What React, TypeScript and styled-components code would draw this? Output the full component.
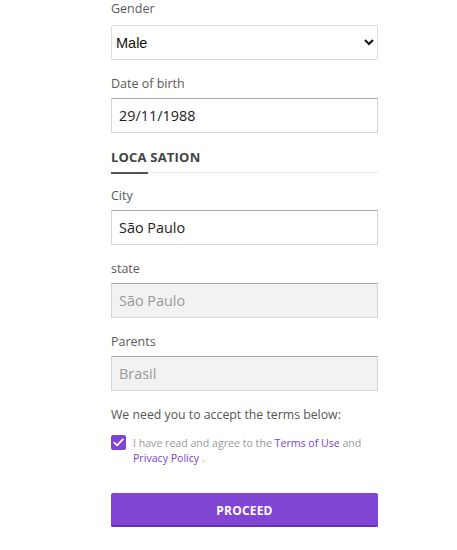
import styled, { createGlobalStyle } from "styled-components";
import { useState } from "react";

const GlobalStyle = createGlobalStyle`
  html, body {
    margin: 0;
    padding: 0;
    background: #fff;
  }
  body {
    font-family: "Open Sans", "Liberation Sans", Arial, sans-serif;
  }
`;

const Page = styled.div`
  width: 457px;
  height: 550px;
  overflow: hidden;
  padding-left: 111px;
  box-sizing: border-box;
`;

const Form = styled.form`
  width: 267px;
  display: flex;
  flex-direction: column;
  margin: 0;
`;

const Field = styled.div`
  display: flex;
  flex-direction: column;
  margin-bottom: 15px;
`;

const Label = styled.label`
  font-size: 12.5px;
  line-height: 18px;
  color: #5a5a5a;
  margin-bottom: 5px;
`;

const Select = styled.select`
  height: 35px;
  width: 100%;
  margin-top: 2px;
  box-sizing: border-box;
  border: 1px solid #dcdcdc;
  border-radius: 2px;
  background: #fff;
  font-family: "Liberation Sans", Arial, sans-serif;
  font-size: 14.5px;
  color: #111;
  padding: 0;
  outline: none;
`;

const Input = styled.input<{ $disabled?: boolean }>`
  height: 35px;
  width: 100%;
  box-sizing: border-box;
  border: 1px solid #d6d6d6;
  border-top-color: #a9a9a9;
  background: ${(p) => (p.$disabled ? "#f2f2f2" : "#fff")};
  font-family: "Open Sans", sans-serif;
  font-size: 14.4px;
  color: ${(p) => (p.$disabled ? "#999" : "#222")};
  padding: 0 7px;
  outline: none;
  margin: 0;
  &:disabled {
    opacity: 1;
    -webkit-text-fill-color: #999;
  }
`;

const Section = styled.div`
  margin-bottom: 14px;
`;

const SectionTitle = styled.h3`
  margin: 0;
  font-family: "Open Sans", sans-serif;
  font-weight: 700;
  font-size: 13px;
  line-height: 18px;
  letter-spacing: 0.2px;
  color: #444;
  padding-bottom: 6px;
  border-bottom: 1px solid #ececec;
  position: relative;
  &::after {
    content: "";
    position: absolute;
    left: 0;
    bottom: -2px;
    width: 37px;
    height: 2px;
    background: #555;
  }
`;

const Note = styled.p`
  margin: 0 0 11px;
  font-size: 12.3px;
  line-height: 18px;
  color: #555;
`;

const Agree = styled.label`
  display: flex;
  align-items: flex-start;
  gap: 7px;
  cursor: pointer;
`;

const Box = styled.span<{ $checked: boolean }>`
  flex: 0 0 15px;
  width: 15px;
  height: 15px;
  border-radius: 2px;
  background: ${(p) => (p.$checked ? "#7e44d3" : "#fff")};
  border: ${(p) => (p.$checked ? "none" : "1px solid #aaa")};
  box-sizing: border-box;
  display: flex;
  align-items: center;
  justify-content: center;
`;

const AgreeText = styled.span`
  font-size: 10.6px;
  line-height: 15px;
  color: #999;
  margin-top: 1px;
`;

const Link = styled.a`
  color: #7c3fcd;
  text-decoration: none;
`;

const Button = styled.button`
  margin-top: 27px;
  height: 34px;
  width: 100%;
  border: none;
  border-radius: 2px;
  background: #8145d4;
  box-shadow: inset 0 -2px 0 #6a2fb8;
  color: #fff;
  font-family: "Open Sans", sans-serif;
  font-weight: 700;
  font-size: 12px;
  letter-spacing: 0.2px;
  cursor: pointer;
`;

const HiddenCheck = styled.input`
  display: none;
`;

export default function App() {
  const [checked, setChecked] = useState(true);
  const [gender, setGender] = useState("Male");
  const [dob, setDob] = useState("29/11/1988");
  const [city, setCity] = useState("São Paulo");

  return (
    <>
      <GlobalStyle />
      <Page>
        <Form onSubmit={(e) => e.preventDefault()}>
          <Field>
            <Label>Gender</Label>
            <Select value={gender} onChange={(e) => setGender(e.target.value)}>
              <option>Male</option>
              <option>Female</option>
            </Select>
          </Field>
          <Field>
            <Label>Date of birth</Label>
            <Input value={dob} onChange={(e) => setDob(e.target.value)} />
          </Field>
          <Section>
            <SectionTitle>LOCA SATION</SectionTitle>
          </Section>
          <Field>
            <Label>City</Label>
            <Input value={city} onChange={(e) => setCity(e.target.value)} />
          </Field>
          <Field>
            <Label>state</Label>
            <Input $disabled disabled value="São Paulo" readOnly />
          </Field>
          <Field>
            <Label>Parents</Label>
            <Input $disabled disabled value="Brasil" readOnly />
          </Field>
          <Note>We need you to accept the terms below:</Note>
          <Agree>
            <HiddenCheck
              type="checkbox"
              checked={checked}
              onChange={() => setChecked(!checked)}
            />
            <Box $checked={checked}>
              {checked && (
                <svg width="11" height="9" viewBox="0 0 11 9">
                  <path
                    d="M1.2 4.6 L4.2 7.4 L9.8 1.4"
                    fill="none"
                    stroke="#fff"
                    strokeWidth="1.8"
                    strokeLinecap="round"
                    strokeLinejoin="round"
                  />
                </svg>
              )}
            </Box>
            <AgreeText>
              I have read and agree to the <Link href="#">Terms of Use</Link> and{" "}
              <Link href="#">Privacy Policy</Link> .
            </AgreeText>
          </Agree>
          <Button type="submit">PROCEED</Button>
        </Form>
      </Page>
    </>
  );
}
